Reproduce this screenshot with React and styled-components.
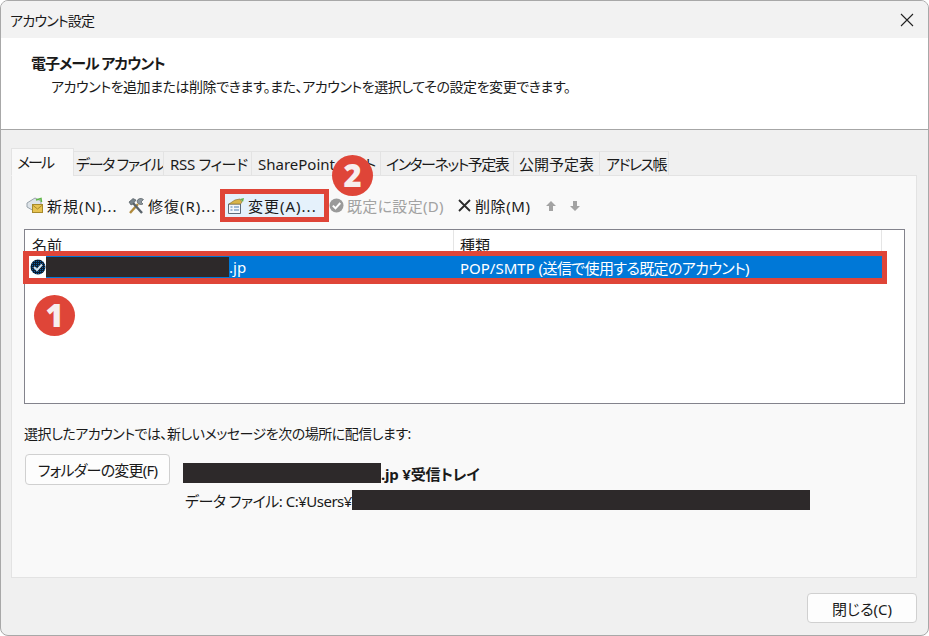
import React from 'react';
import styled, { createGlobalStyle } from 'styled-components';

const GlobalStyle = createGlobalStyle`
    html, body {
        margin: 0;
        padding: 0;
        background: #fff;
    }
    body {
        font-family: "Noto Sans", "Noto Sans CJK JP", sans-serif;
        font-size: 15px;
        font-feature-settings: "palt";
        color: #1a1a1a;
    }
`;

const tabs = [
    { label: 'メール', width: 62, pad: 5, spacing: -2 },
    { label: 'データ ファイル', width: 90, pad: 2, spacing: -1.3 },
    { label: 'RSS フィード', width: 88, pad: 6, spacing: -0.3 },
    { label: 'SharePoint リスト', width: 129, pad: 6, spacing: 0 },
    { label: 'インターネット予定表', width: 133, pad: 5, spacing: -1.5 },
    { label: '公開予定表', width: 86, pad: 5, spacing: 0 },
    { label: 'アドレス帳', width: 69, pad: 6, spacing: -1.5 },
];

const MailIcon = () => (
    <svg width="18" height="19" viewBox="0 0 18 19">
        <path d="M1 7 L9 2 L15 5 L15 11 L8 15 L1 11 Z" fill="#dde3e8" stroke="#98a3ab" />
        <path d="M10 4 L15 2.5 L15.5 6" fill="none" stroke="#5fb548" strokeWidth="1.5" />
        <rect x="6.5" y="8.5" width="10" height="8" fill="#e7c352" stroke="#a78a2c" />
        <path d="M6.5 9 L11.5 13 L16.5 9" fill="none" stroke="#a78a2c" />
    </svg>
);

const ToolsIcon = () => (
    <svg width="18" height="18" viewBox="0 0 18 18">
        <path d="M3 16 L11 7" stroke="#b08a3c" strokeWidth="2.4" />
        <path d="M15 16 L6 6" stroke="#59636b" strokeWidth="2.4" />
        <path d="M2 5 L6 1.5 L9 3 L6 7 L4 8 Z" fill="#79848c" stroke="#454d53" strokeWidth="0.6" />
        <path d="M10 4 A4 4 0 0 1 16.5 2.5 L14 5 L16 7 A4 4 0 0 1 10 4 Z" fill="#8b959c" stroke="#454d53" strokeWidth="0.6" />
    </svg>
);

const ChangeIcon = () => (
    <svg width="18" height="18" viewBox="0 0 18 18">
        <path d="M1.5 7 L1.5 16.5 L13.5 16.5 L13.5 7 Z" fill="#f4f7fa" stroke="#5d6b78" />
        <path d="M3.5 10 H5.5 M7 10 H12 M3.5 13 H5.5 M7 13 H12" stroke="#4c7fb0" strokeWidth="1.2" />
        <path d="M2 7 L8 3 L13 2 L15 5 L13.5 7 Z" fill="#d9b54a" stroke="#8f7630" strokeWidth="0.7" />
        <path d="M13 2 L17 1 L16 5" fill="#62b04a" />
    </svg>
);

const CheckIcon = ({ fill = '#9a9a9a', size = 15 }) => (
    <svg width={size} height={size} viewBox="0 0 15 15">
        <circle cx="7.5" cy="7.5" r="7" fill={fill} />
        <path d="M3.8 7.6 L6.5 10.3 L11.3 5" fill="none" stroke="#fff" strokeWidth="2" />
    </svg>
);

const DitherCheckIcon = () => (
    <svg width="16" height="16" viewBox="0 0 16 16">
        <defs>
            <pattern id="dither" width="2" height="2" patternUnits="userSpaceOnUse">
                <rect width="2" height="2" fill="#0c1c2e" />
                <rect width="1" height="1" fill="#0a5ea8" />
            </pattern>
        </defs>
        <circle cx="8" cy="8" r="7.5" fill="url(#dither)" />
        <path d="M4 8 L7 11 L12 5.5" fill="none" stroke="#d5e4ef" strokeWidth="2" />
    </svg>
);

const DeleteIcon = () => (
    <svg width="15" height="15" viewBox="0 0 15 15">
        <path d="M2 2 L13 13 M13 2 L2 13" stroke="#2b2b2b" strokeWidth="1.8" />
    </svg>
);

const ArrowIcon = ({ down }) => (
    <svg width="12" height="12" viewBox="0 0 12 12">
        <path d={down ? 'M4 1 H8 V6 H11 L6 11 L1 6 H4 Z' : 'M4 11 H8 V6 H11 L6 1 L1 6 H4 Z'} fill="#a3a3a3" />
    </svg>
);

const CloseIcon = () => (
    <svg width="14" height="14" viewBox="0 0 14 14">
        <path d="M1 1 L13 13 M13 1 L1 13" stroke="#222" strokeWidth="1.1" />
    </svg>
);

const App = () => (
    <Page>
        <GlobalStyle />
        <TitleBar>
            <span>アカウント設定</span>
            <CloseButton><CloseIcon /></CloseButton>
        </TitleBar>
        <Header>
            <HeaderTitle>電子メール アカウント</HeaderTitle>
            <HeaderText>アカウントを追加または削除できます。また、アカウントを選択してその設定を変更できます。</HeaderText>
        </Header>
        <Body>
            <TabRow>
                {tabs.map((tab, i) => (
                    <Tab key={tab.label} $active={i === 0} $width={tab.width} $pad={tab.pad} $spacing={tab.spacing}>
                        {tab.label}
                    </Tab>
                ))}
            </TabRow>
            <Panel>
                <Badge $left={320} $top={-21}>2</Badge>
                <Toolbar>
                    <ToolButton $width={101}><MailIcon />新規(N)...</ToolButton>
                    <ToolButton $width={93}><ToolsIcon />修復(R)...</ToolButton>
                    <ChangeButton><ChangeIcon />変更(A)...</ChangeButton>
                    <ToolButton $width={128} $spacing={0.3} $disabled><CheckIcon />既定に設定(D)</ToolButton>
                    <ToolButton $width={88} $spacing={0.6}><DeleteIcon />削除(M)</ToolButton>
                    <ArrowGroup>
                        <ArrowIcon />
                        <ArrowIcon down />
                    </ArrowGroup>
                </Toolbar>
                <AccountList>
                    <ListHead>
                        <NameCol>名前</NameCol>
                        <TypeCol>種類</TypeCol>
                    </ListHead>
                    <SelectedRow>
                        <RowIcon><DitherCheckIcon /></RowIcon>
                        <NameCell><Redacted $width={183} />.jp</NameCell>
                        <TypeCell>POP/SMTP <TightText>(送信で使用する既定のアカウント)</TightText></TypeCell>
                    </SelectedRow>
                    <Badge $left={9} $top={65}>1</Badge>
                </AccountList>
                <Note>選択したアカウントでは、新しいメッセージを次の場所に配信します:</Note>
                <DeliveryRow>
                    <FolderButton>フォルダーの変更(F)</FolderButton>
                    <DeliveryInfo>
                        <DeliveryPath><Redacted $width={198} />.jp ¥受信トレイ</DeliveryPath>
                        <DataFile>データ ファイル: C:¥Users¥<Redacted $width={458} /></DataFile>
                    </DeliveryInfo>
                </DeliveryRow>
            </Panel>
            <Footer>
                <FooterButton>閉じる(C)</FooterButton>
            </Footer>
        </Body>
    </Page>
);

const Page = styled.div`
    width: 929px;
    height: 636px;
    box-sizing: border-box;
    overflow: hidden;
    background: #f0f0f0;
    border: 1px solid #a8a8a8;
    border-radius: 8px;
    display: flex;
    flex-direction: column;
`;

const TitleBar = styled.div`
    height: 37px;
    flex: none;
    display: flex;
    align-items: center;
    justify-content: space-between;
    padding-left: 9px;
    font-size: 14px;
    letter-spacing: -0.8px;
    background: #f2f2f2;
`;

const CloseButton = styled.div`
    width: 42px;
    height: 37px;
    display: flex;
    align-items: center;
    justify-content: center;
`;

const Header = styled.div`
    height: 92px;
    flex: none;
    box-sizing: border-box;
    background: #fff;
    border-bottom: 1px solid #a6a6a6;
    padding: 15px 0 0 30px;
`;

const HeaderTitle = styled.div`
    font-weight: 700;
    line-height: 20px;
    letter-spacing: -1px;
`;

const HeaderText = styled.div`
    font-size: 14px;
    line-height: 20px;
    letter-spacing: -0.45px;
    margin: 4px 0 0 20px;
`;

const Body = styled.div`
    flex: 1;
    display: flex;
    flex-direction: column;
    padding: 18px 11px 12px 10px;
    min-height: 0;
`;

const TabRow = styled.div`
    display: flex;
    align-items: flex-end;
    height: 28px;
    flex: none;
    position: relative;
    z-index: 1;
    margin-bottom: -1px;
`;

const Tab = styled.div`
    box-sizing: border-box;
    width: ${(p) => p.$width + 1}px;
    height: ${(p) => (p.$active ? '28px' : '25px')};
    padding: ${(p) => (p.$active ? '0 0 1px' : '0')} ${(p) => p.$pad}px;
    padding-right: 0;
    display: flex;
    align-items: center;
    white-space: nowrap;
    letter-spacing: ${(p) => p.$spacing}px;
    background: ${(p) => (p.$active ? '#f9f9f9' : '#f0f0f0')};
    border: 1px solid #e3e3e3;
    border-bottom-color: ${(p) => (p.$active ? '#f9f9f9' : '#e3e3e3')};
    margin-right: -1px;
`;

const Panel = styled.div`
    flex: 1;
    position: relative;
    background: #f9f9f9;
    border: 1px solid #e3e3e3;
    padding: 0 11px 0 12px;
    min-height: 0;
`;

const Badge = styled.div`
    position: absolute;
    left: ${(p) => p.$left}px;
    top: ${(p) => p.$top}px;
    width: 41px;
    height: 41px;
    border-radius: 50%;
    background: #df4538;
    color: #f7efee;
    font-family: "Open Sans", sans-serif;
    font-weight: 800;
    font-size: 31px;
    line-height: 41px;
    letter-spacing: 0;
    text-align: center;
    z-index: 3;
`;

const Toolbar = styled.div`
    height: 53px;
    display: flex;
    align-items: center;
    padding: 6px 0 0 2px;
    box-sizing: border-box;
`;

const ToolButton = styled.div`
    width: ${(p) => p.$width}px;
    flex: none;
    display: flex;
    align-items: center;
    gap: 3px;
    white-space: nowrap;
    letter-spacing: ${(p) => p.$spacing ?? 1}px;
    color: ${(p) => (p.$disabled ? '#a2a2a2' : 'inherit')};
`;

const ChangeButton = styled(ToolButton)`
    width: 109px;
    height: 33px;
    box-sizing: border-box;
    padding-left: 2px;
    background: #e5f1fb;
    border: 5px solid #df4538;
`;

const ArrowGroup = styled.div`
    display: flex;
    gap: 12px;
`;

const AccountList = styled.div`
    position: relative;
    height: 175px;
    box-sizing: border-box;
    background: #fff;
    border: 1px solid #83838c;
`;

const ListHead = styled.div`
    display: grid;
    grid-template-columns: 429px 428px;
    height: 26px;
`;

const NameCol = styled.div`
    padding-left: 7px;
    display: flex;
    align-items: flex-end;
    line-height: 22px;
    border-right: 1px solid #e5e5e5;
`;

const TypeCol = styled(NameCol)`
    padding-left: 6px;
`;

const SelectedRow = styled.div`
    position: relative;
    display: grid;
    grid-template-columns: 17px 408px 429px;
    width: 854px;
    height: 22px;
    box-sizing: border-box;
    align-items: center;
    color: #fff;
    background: #0078d7;
    border-right: 1px solid #fff;
    margin-left: 4px;

    &::after {
        content: "";
        position: absolute;
        inset: -5px -5px -6px -6px;
        border: solid #df4538;
        border-width: 5px 5px 6px 6px;
    }
`;

const RowIcon = styled.div`
    height: 100%;
    background: #fff;
    display: flex;
    align-items: center;
    justify-content: center;
`;

const NameCell = styled.div`
    display: flex;
    align-items: center;
`;

const TypeCell = styled.div`
    padding-left: 6px;
    white-space: nowrap;
`;

const TightText = styled.span`
    letter-spacing: -0.6px;
`;

const Redacted = styled.span`
    display: inline-block;
    width: ${(p) => p.$width}px;
    height: 20px;
    flex: none;
    vertical-align: middle;
    background: #2d292a;
`;

const Note = styled.div`
    margin-top: 20px;
    line-height: 20px;
    font-size: 14px;
    letter-spacing: -0.5px;
`;

const DeliveryRow = styled.div`
    display: flex;
    margin: 10px 0 0 1px;
`;

const FolderButton = styled.div`
    width: 145px;
    height: 31px;
    box-sizing: border-box;
    flex: none;
    display: flex;
    align-items: center;
    justify-content: center;
    letter-spacing: -0.8px;
    background: #fdfdfd;
    border: 1px solid #d0d0d0;
    border-radius: 4px;
`;

const DeliveryInfo = styled.div`
    margin: 9px 0 0 13px;
`;

const DeliveryPath = styled.div`
    display: flex;
    align-items: center;
    font-weight: 700;
    height: 20px;
    letter-spacing: -0.2px;
`;

const DataFile = styled.div`
    display: flex;
    align-items: center;
    height: 20px;
    margin: 7px 0 0 2px;
    white-space: nowrap;
    letter-spacing: -0.5px;
`;

const Footer = styled.div`
    display: flex;
    justify-content: flex-end;
    flex: none;
    padding-top: 15px;
`;

const FooterButton = styled(FolderButton)`
    width: 110px;
    height: 30px;
    letter-spacing: 0;
`;

export default App;
